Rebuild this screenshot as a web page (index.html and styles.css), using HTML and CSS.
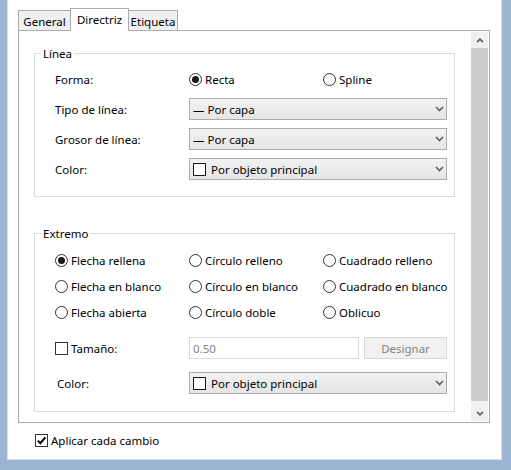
FILE: index.html
```html
<!DOCTYPE html>
<html lang="es">
<head>
<meta charset="utf-8">
<title>Directriz</title>
<link rel="stylesheet" href="styles.css">
</head>
<body>
<div class="window">
  <div class="tabs">
    <div class="tab tab-general">General</div>
    <div class="tab tab-active">Directriz</div>
    <div class="tab tab-etiqueta">Etiqueta</div>
  </div>
  <div class="panel">
    <div class="content">
      <fieldset class="group">
        <legend>Línea</legend>
        <div class="linea-grid">
          <div class="label">Forma:</div>
          <div class="radio-pair">
            <span class="opt"><span class="radio checked"></span>Recta</span>
            <span class="opt"><span class="radio"></span>Spline</span>
          </div>
          <div class="label">Tipo de línea:</div>
          <div class="select"><span class="val">— Por capa</span><svg class="chev" width="9" height="6" viewBox="0 0 9 6"><polyline points="1,1 4.5,4.5 8,1" fill="none" stroke="#606060" stroke-width="1.6"/></svg></div>
          <div class="label">Grosor de línea:</div>
          <div class="select"><span class="val">— Por capa</span><svg class="chev" width="9" height="6" viewBox="0 0 9 6"><polyline points="1,1 4.5,4.5 8,1" fill="none" stroke="#606060" stroke-width="1.6"/></svg></div>
          <div class="label">Color:</div>
          <div class="select"><span class="swatch"></span><span class="val">Por objeto principal</span><svg class="chev" width="9" height="6" viewBox="0 0 9 6"><polyline points="1,1 4.5,4.5 8,1" fill="none" stroke="#606060" stroke-width="1.6"/></svg></div>
        </div>
      </fieldset>
      <fieldset class="group group-extremo">
        <legend>Extremo</legend>
        <div class="extremo-body">
          <div class="radio-grid">
            <span class="opt"><span class="radio checked"></span>Flecha rellena</span>
            <span class="opt"><span class="radio"></span>Círculo relleno</span>
            <span class="opt"><span class="radio"></span>Cuadrado relleno</span>
            <span class="opt"><span class="radio"></span>Flecha en blanco</span>
            <span class="opt"><span class="radio"></span>Círculo en blanco</span>
            <span class="opt"><span class="radio"></span>Cuadrado en blanco</span>
            <span class="opt"><span class="radio"></span>Flecha abierta</span>
            <span class="opt"><span class="radio"></span>Círculo doble</span>
            <span class="opt"><span class="radio"></span>Oblicuo</span>
          </div>
          <div class="field-row row-size">
            <span class="opt"><span class="check"></span>Tamaño:</span>
            <div class="size-ctrl">
              <div class="input">0.50</div>
              <div class="button">Designar</div>
            </div>
          </div>
          <div class="field-row row-color">
            <div class="label label-indent">Color:</div>
            <div class="select"><span class="swatch"></span><span class="val">Por objeto principal</span><svg class="chev" width="9" height="6" viewBox="0 0 9 6"><polyline points="1,1 4.5,4.5 8,1" fill="none" stroke="#606060" stroke-width="1.6"/></svg></div>
          </div>
        </div>
      </fieldset>
    </div>
    <div class="scrollbar">
      <div class="arrow"><svg width="8" height="5" viewBox="0 0 8 5"><polyline points="1,4.2 4,1.2 7,4.2" fill="none" stroke="#606060" stroke-width="1.7"/></svg></div>
      <div class="thumb"></div>
      <div class="arrow"><svg width="8" height="5" viewBox="0 0 8 5"><polyline points="1,0.8 4,3.8 7,0.8" fill="none" stroke="#606060" stroke-width="1.7"/></svg></div>
    </div>
  </div>
  <div class="apply">
    <span class="check checked"><svg width="11" height="11" viewBox="0 0 11 11"><polyline points="1.8,5.6 4.3,8.2 9.4,2.4" fill="none" stroke="#000" stroke-width="2"/></svg></span>
    <span class="txt">Aplicar cada cambio</span>
  </div>
</div>
</body>
</html>
```
FILE: styles.css
```css
* { box-sizing: border-box; }

body {
  margin: 0;
  background: #9bb5d3;
  font-family: "Noto Sans", "DejaVu Sans", sans-serif;
  font-size: 11.5px;
  line-height: 16px;
  color: #000;
}

.window {
  margin-left: 7px;
  width: 495px;
  height: 460px;
  background: #fff;
  border: 1px solid #d6dee8;
  border-top: none;
  padding: 8px 0 0 10px;
}

/* tabs */
.tabs {
  display: flex;
  align-items: flex-end;
  height: 22px;
  position: relative;
  z-index: 1;
}
.tab {
  height: 20px;
  border: 1px solid #acacac;
  border-bottom: none;
  background: #f0f0f0;
  text-align: center;
  line-height: 16px;
  padding-top: 3px;
}
.tab-general { width: 53px; }
.tab-active {
  width: 59px;
  height: 23px;
  margin: 0 0 -1px -1px;
  background: #fff;
  padding-top: 3px;
  position: relative;
  z-index: 1;
}
.tab-etiqueta { width: 50px; margin-left: -1px; }

/* panel */
.panel {
  width: 472px;
  height: 393px;
  border: 1px solid #acacac;
  display: flex;
}
.content {
  flex: 1;
  padding: 14px 0 0 15px;
}

.group {
  margin: 0;
  padding: 0;
  width: 421px;
  min-width: 0;
  border: 1px solid #dcdcdc;
}
.group legend {
  margin-left: 6px;
  padding: 1px 2px 0;
  line-height: 15px;
}
.group-extremo { margin-top: 28px; }

.linea-grid {
  display: grid;
  grid-template-columns: 134px 258px;
  grid-auto-rows: 22px;
  row-gap: 8px;
  align-items: center;
  padding: 7px 7px 16px 20px;
}

.label, .opt .txt, .select .val, .input, .button {
  padding-top: 1px;
}

.radio-pair {
  display: grid;
  grid-template-columns: 134px auto;
  align-items: center;
}

.opt {
  display: inline-flex;
  align-items: center;
  gap: 3px;
  white-space: nowrap;
  padding-top: 1px;
}

.radio {
  width: 13px;
  height: 13px;
  border: 1px solid #333;
  border-radius: 50%;
  background: #fff;
  display: inline-flex;
  align-items: center;
  justify-content: center;
  flex: none;
}
.radio.checked::after {
  content: "";
  width: 7px;
  height: 7px;
  border-radius: 50%;
  background: #1a1a1a;
}

.check {
  width: 13px;
  height: 13px;
  border: 1px solid #333;
  background: #fff;
  display: inline-flex;
  align-items: center;
  justify-content: center;
  flex: none;
}

.select {
  height: 22px;
  border: 1px solid #acacac;
  background: linear-gradient(#f2f2f2, #e5e5e5);
  display: flex;
  align-items: center;
  padding: 0 2px 0 3px;
}
.select .val { flex: 1; white-space: nowrap; }
.select .chev { flex: none; }
.swatch {
  width: 13px;
  height: 13px;
  border: 1px solid #1a1a1a;
  background: #fff;
  margin-right: 5px;
  flex: none;
}

.extremo-body {
  padding: 6px 7px 17px 20px;
}
.radio-grid {
  display: grid;
  grid-template-columns: 134px 134px 124px;
  grid-auto-rows: 26px;
  align-items: center;
}
.field-row {
  display: grid;
  grid-template-columns: 134px 258px;
  height: 22px;
  align-items: center;
}
.row-size { margin-top: 12px; }
.row-color { margin-top: 13px; }
.label-indent { padding-left: 2px; }

.size-ctrl {
  display: flex;
  height: 22px;
}
.input {
  width: 170px;
  border: 1px solid #d9d9d9;
  color: #838383;
  padding-left: 3px;
  line-height: 19px;
}
.button {
  width: 83px;
  margin-left: 5px;
  border: 1px solid #d9d9d9;
  background: #f1f1f1;
  color: #838383;
  text-align: center;
  line-height: 19px;
}

/* scrollbar */
.scrollbar {
  width: 17px;
  margin: 1px 1px 1px 0;
  background: #f0f0f0;
  display: flex;
  flex-direction: column;
}
.arrow {
  height: 16px;
  display: flex;
  align-items: center;
  justify-content: center;
}
.thumb {
  flex: 1;
  background: #cdcdcd;
  margin-bottom: 4px;
}

/* bottom checkbox */
.apply {
  display: flex;
  align-items: center;
  gap: 3px;
  margin: 11px 0 0 17px;
  height: 13px;
}
.apply .txt { padding-top: 1px; }
```
